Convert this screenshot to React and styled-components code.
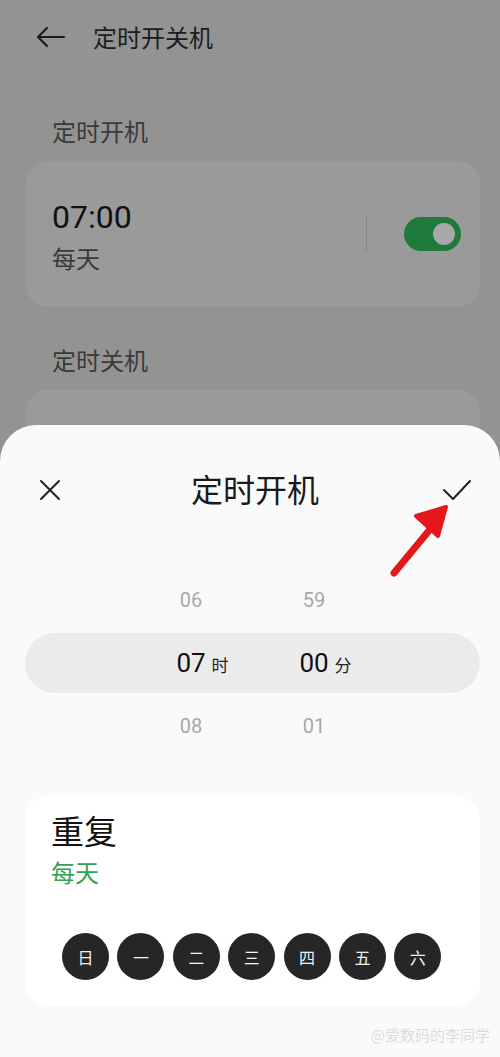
import React from "react";
import styled, { createGlobalStyle } from "styled-components";

const GlobalStyle = createGlobalStyle`
  html, body {
    margin: 0;
    padding: 0;
  }
  body {
    font-family: "Roboto", "Noto Sans CJK SC", sans-serif;
    background: #939393;
  }
`;

const CJK = `"Noto Sans CJK SC", "Noto Sans", sans-serif`;
const NUM = `"Roboto", "Noto Sans CJK SC", sans-serif`;

const days = ["日", "一", "二", "三", "四", "五", "六"];

const App = () => {
  return (
    <Screen>
      <GlobalStyle />
      <Behind>
        <TopBar>
          <svg width="30" height="22" viewBox="0 0 30 22">
            <path d="M28 11H2M11 2L2 11l9 9" fill="none" stroke="#1c1c1c" strokeWidth="2.2" strokeLinecap="round" strokeLinejoin="round" />
          </svg>
          <TopTitle>定时开关机</TopTitle>
        </TopBar>

        <SectionLabel $top={42}>定时开机</SectionLabel>
        <Card>
          <TimeBlock>
            <BigTime>07:00</BigTime>
            <SubText>每天</SubText>
          </TimeBlock>
          <Divider />
          <Toggle>
            <Knob />
          </Toggle>
        </Card>

        <SectionLabel $top={38}>定时关机</SectionLabel>
        <Card />
      </Behind>

      <Sheet>
        <SheetHeader>
          <svg width="24" height="24" viewBox="0 0 24 24">
            <path d="M3 3l18 18M21 3L3 21" fill="none" stroke="#222" strokeWidth="2" strokeLinecap="round" />
          </svg>
          <SheetTitle>定时开机</SheetTitle>
          <svg width="30" height="24" viewBox="0 0 30 24">
            <path d="M2 12l9 9L28 3" fill="none" stroke="#222" strokeWidth="2" strokeLinecap="round" strokeLinejoin="round" />
          </svg>
        </SheetHeader>

        <Annotation width="70" height="80" viewBox="0 0 70 80">
          <path d="M8 72L46 26" stroke="#e6161d" strokeWidth="7" strokeLinecap="round" />
          <path d="M60 6L30 15L52 35Z" fill="#e6161d" stroke="#e6161d" strokeWidth="4" strokeLinejoin="round" />
        </Annotation>

        <Picker>
          <PickRow>
            <PickCell><Faint>06</Faint></PickCell>
            <PickCell><Faint>59</Faint></PickCell>
          </PickRow>
          <PickRow $selected>
            <PickCell>
              <Strong>07</Strong>
              <Unit>时</Unit>
            </PickCell>
            <PickCell>
              <Strong>00</Strong>
              <Unit>分</Unit>
            </PickCell>
          </PickRow>
          <PickRow>
            <PickCell><Faint>08</Faint></PickCell>
            <PickCell><Faint>01</Faint></PickCell>
          </PickRow>
        </Picker>

        <RepeatCard>
          <RepeatTitle>重复</RepeatTitle>
          <RepeatValue>每天</RepeatValue>
          <DayRow>
            {days.map((d) => (
              <Day key={d}>{d}</Day>
            ))}
          </DayRow>
        </RepeatCard>

        <Watermark>@爱数码的李同学</Watermark>
      </Sheet>
    </Screen>
  );
};

export default App;

const Screen = styled.div`
  position: relative;
  width: 500px;
  height: 1057px;
  overflow: hidden;
  background: #939393;
`;

const Behind = styled.div`
  display: flex;
  flex-direction: column;
  padding: 0 20px 0 26px;
`;

const TopBar = styled.div`
  display: flex;
  align-items: center;
  gap: 27px;
  height: 74px;
  padding-left: 10px;
  svg {
    flex: none;
  }
`;

const TopTitle = styled.div`
  font-family: ${CJK};
  font-size: 24px;
  color: #1c1c1c;
  line-height: 30px;
`;

const SectionLabel = styled.div`
  font-family: ${CJK};
  font-size: 24px;
  color: #3a3a3a;
  padding: ${(p) => p.$top}px 0 0 26px;
  height: 45px;
  line-height: 30px;
`;

const Card = styled.div`
  display: flex;
  align-items: center;
  height: 146px;
  background: #9a9a9a;
  border-radius: 22px;
  padding: 0 19px 0 26px;
`;

const TimeBlock = styled.div`
  flex: 1;
  display: flex;
  flex-direction: column;
  gap: 6px;
  margin-top: 2px;
`;

const BigTime = styled.div`
  font-family: ${NUM};
  font-size: 32px;
  color: #111;
  line-height: 40px;
`;

const SubText = styled.div`
  font-family: ${CJK};
  font-size: 24px;
  color: #3a3a3a;
  line-height: 30px;
`;

const Divider = styled.div`
  width: 1px;
  height: 36px;
  background: #888;
  margin-right: 37px;
`;

const Toggle = styled.div`
  width: 57px;
  height: 34px;
  border-radius: 17px;
  background: #1f7a3b;
  display: flex;
  align-items: center;
  justify-content: flex-end;
  padding-right: 6px;
  box-sizing: border-box;
`;

const Knob = styled.div`
  width: 22px;
  height: 22px;
  border-radius: 50%;
  background: #a9a9a9;
`;

const Sheet = styled.div`
  position: absolute;
  left: 0;
  right: 0;
  top: 425px;
  bottom: 0;
  background: #fafafa;
  border-radius: 36px 36px 0 0;
  display: flex;
  flex-direction: column;
  padding: 0 20px 0 25px;
`;

const SheetHeader = styled.div`
  display: flex;
  align-items: center;
  justify-content: space-between;
  height: 130px;
  padding: 0 8px 0 13px;
  svg {
    flex: none;
  }
`;

const SheetTitle = styled.div`
  font-family: ${CJK};
  font-size: 32px;
  color: #1a1a1a;
  line-height: 40px;
  margin: -4px 0 0 6px;
`;

const Annotation = styled.svg`
  position: absolute;
  left: 386px;
  top: 76px;
`;

const Picker = styled.div`
  display: flex;
  flex-direction: column;
  gap: 3px;
  margin-top: 15px;
`;

const PickRow = styled.div`
  display: grid;
  grid-template-columns: 123px 123px;
  justify-content: center;
  align-items: center;
  height: 60px;
  border-radius: 30px;
  background: ${(p) => (p.$selected ? "#ebebeb" : "transparent")};
`;

const PickCell = styled.div`
  display: grid;
  grid-template-columns: 1fr auto 1fr;
  align-items: baseline;
`;

const Faint = styled.span`
  grid-column: 2;
  font-family: ${NUM};
  font-size: 20px;
  color: #a8a8a8;
`;

const Strong = styled.span`
  grid-column: 2;
  font-family: ${NUM};
  font-size: 26px;
  color: #111;
`;

const Unit = styled.span`
  grid-column: 3;
  justify-self: start;
  font-family: ${CJK};
  font-size: 17px;
  color: #222;
  margin-left: 6px;
`;

const RepeatCard = styled.div`
  margin-top: 40px;
  height: 210px;
  box-sizing: border-box;
  background: #ffffff;
  border-radius: 24px;
  padding: 12px 26px 0 26px;
  display: flex;
  flex-direction: column;
`;

const RepeatTitle = styled.div`
  font-family: ${CJK};
  font-size: 33px;
  color: #111;
  line-height: 44px;
`;

const RepeatValue = styled.div`
  font-family: ${CJK};
  font-size: 24px;
  color: #34a05a;
  line-height: 32px;
  margin-top: 4px;
`;

const DayRow = styled.div`
  display: flex;
  gap: 8.4px;
  margin-top: 45px;
  padding-left: 11px;
`;

const Day = styled.div`
  flex: none;
  width: 47px;
  height: 47px;
  border-radius: 50%;
  background: #262626;
  color: #f2f2f2;
  font-family: ${CJK};
  font-size: 16px;
  display: flex;
  align-items: center;
  justify-content: center;
`;

const Watermark = styled.div`
  align-self: flex-end;
  margin-top: 18px;
  margin-right: -10px;
  font-family: ${CJK};
  font-size: 15px;
  color: #dcdcdc;
`;
